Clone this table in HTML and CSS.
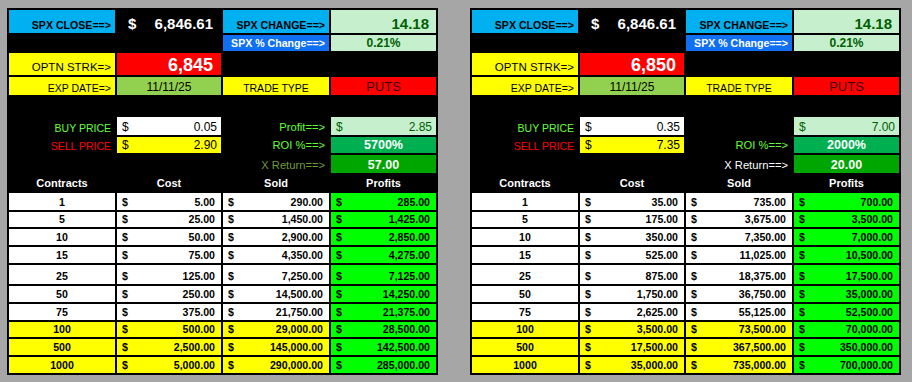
FILE: index.html
```html
<!DOCTYPE html>
<html>
<head>
<meta charset="utf-8">
<link rel="stylesheet" href="styles.css">
</head>
<body>
<div class="wrap">
  <div class="sheet">
    <div class="c r cy lbl b">SPX CLOSE==&gt;</div>
    <div class="c m big w"><span>$</span><span>6,846.61</span></div>
    <div class="c r cy lbl b">SPX CHANGE==&gt;</div>
    <div class="c r lg chg b">14.18</div>

    <div class="c"></div>
    <div class="c"></div>
    <div class="c r bl lbl b w">SPX % Change==&gt;</div>
    <div class="c ctr lg pct b">0.21%</div>

    <div class="c r ye strk">OPTN STRK=&gt;</div>
    <div class="c r rd bigr b w">6,845</div>
    <div class="c"></div>
    <div class="c"></div>

    <div class="c r ye lbl2">EXP DATE=&gt;</div>
    <div class="c ctr eg date">11/11/25</div>
    <div class="c ctr ye lbl2">TRADE TYPE</div>
    <div class="c ctr rd puts">PUTS</div>

    <div class="c"></div><div class="c"></div><div class="c"></div><div class="c"></div>

    <div class="c r lbl2 tg">BUY PRICE</div>
    <div class="c m wh price"><span>$</span><span>0.05</span></div>
    <div class="c r glbl tg">Profit==&gt;</div>
    <div class="c m lg price dg"><span>$</span><span>2.85</span></div>

    <div class="c r lbl2 tr">SELL PRICE</div>
    <div class="c m ye price"><span>$</span><span>2.90</span></div>
    <div class="c r glbl tg">ROI %==&gt;</div>
    <div class="c ctr roi val b w">5700%</div>

    <div class="c"></div>
    <div class="c"></div>
    <div class="c r glbl to">X Return==&gt;</div>
    <div class="c ctr xr val b w">57.00</div>

    <div class="c ctr hd">Contracts</div>
    <div class="c ctr hd">Cost</div>
    <div class="c ctr hd">Sold</div>
    <div class="c ctr hd">Profits</div>

    <div class="c ctr wh d">1</div><div class="c m wh d"><span>$</span><span>5.00</span></div><div class="c m wh d"><span>$</span><span>290.00</span></div><div class="c m gr d"><span>$</span><span>285.00</span></div>
    <div class="c ctr wh d">5</div><div class="c m wh d"><span>$</span><span>25.00</span></div><div class="c m wh d"><span>$</span><span>1,450.00</span></div><div class="c m gr d"><span>$</span><span>1,425.00</span></div>
    <div class="c ctr wh d">10</div><div class="c m wh d"><span>$</span><span>50.00</span></div><div class="c m wh d"><span>$</span><span>2,900.00</span></div><div class="c m gr d"><span>$</span><span>2,850.00</span></div>
    <div class="c ctr wh d">15</div><div class="c m wh d"><span>$</span><span>75.00</span></div><div class="c m wh d"><span>$</span><span>4,350.00</span></div><div class="c m gr d"><span>$</span><span>4,275.00</span></div>
    <div class="c ctr wh d">25</div><div class="c m wh d"><span>$</span><span>125.00</span></div><div class="c m wh d"><span>$</span><span>7,250.00</span></div><div class="c m gr d"><span>$</span><span>7,125.00</span></div>
    <div class="c ctr wh d">50</div><div class="c m wh d"><span>$</span><span>250.00</span></div><div class="c m wh d"><span>$</span><span>14,500.00</span></div><div class="c m gr d"><span>$</span><span>14,250.00</span></div>
    <div class="c ctr wh d">75</div><div class="c m wh d"><span>$</span><span>375.00</span></div><div class="c m wh d"><span>$</span><span>21,750.00</span></div><div class="c m gr d"><span>$</span><span>21,375.00</span></div>
    <div class="c ctr ye d">100</div><div class="c m ye d"><span>$</span><span>500.00</span></div><div class="c m ye d"><span>$</span><span>29,000.00</span></div><div class="c m gr d"><span>$</span><span>28,500.00</span></div>
    <div class="c ctr ye d">500</div><div class="c m ye d"><span>$</span><span>2,500.00</span></div><div class="c m ye d"><span>$</span><span>145,000.00</span></div><div class="c m gr d"><span>$</span><span>142,500.00</span></div>
    <div class="c ctr ye d">1000</div><div class="c m ye d"><span>$</span><span>5,000.00</span></div><div class="c m ye d"><span>$</span><span>290,000.00</span></div><div class="c m gr d"><span>$</span><span>285,000.00</span></div>
  </div>

  <div class="sheet">
    <div class="c r cy lbl b">SPX CLOSE==&gt;</div>
    <div class="c m big w"><span>$</span><span>6,846.61</span></div>
    <div class="c r cy lbl b">SPX CHANGE==&gt;</div>
    <div class="c r lg chg b">14.18</div>

    <div class="c"></div>
    <div class="c"></div>
    <div class="c r bl lbl b w">SPX % Change==&gt;</div>
    <div class="c ctr lg pct b">0.21%</div>

    <div class="c r ye strk">OPTN STRK=&gt;</div>
    <div class="c r rd bigr b w">6,850</div>
    <div class="c"></div>
    <div class="c"></div>

    <div class="c r ye lbl2">EXP DATE=&gt;</div>
    <div class="c ctr eg date">11/11/25</div>
    <div class="c ctr ye lbl2">TRADE TYPE</div>
    <div class="c ctr rd puts">PUTS</div>

    <div class="c"></div><div class="c"></div><div class="c"></div><div class="c"></div>

    <div class="c r lbl2 tg">BUY PRICE</div>
    <div class="c m wh price"><span>$</span><span>0.35</span></div>
    <div class="c"></div>
    <div class="c m lg price dg"><span>$</span><span>7.00</span></div>

    <div class="c r lbl2 tr">SELL PRICE</div>
    <div class="c m ye price"><span>$</span><span>7.35</span></div>
    <div class="c r glbl tg">ROI %==&gt;</div>
    <div class="c ctr roi val b w">2000%</div>

    <div class="c"></div>
    <div class="c"></div>
    <div class="c r glbl w">X Return==&gt;</div>
    <div class="c ctr xr val b w">20.00</div>

    <div class="c ctr hd">Contracts</div>
    <div class="c ctr hd">Cost</div>
    <div class="c ctr hd">Sold</div>
    <div class="c ctr hd">Profits</div>

    <div class="c ctr wh d">1</div><div class="c m wh d"><span>$</span><span>35.00</span></div><div class="c m wh d"><span>$</span><span>735.00</span></div><div class="c m gr d"><span>$</span><span>700.00</span></div>
    <div class="c ctr wh d">5</div><div class="c m wh d"><span>$</span><span>175.00</span></div><div class="c m wh d"><span>$</span><span>3,675.00</span></div><div class="c m gr d"><span>$</span><span>3,500.00</span></div>
    <div class="c ctr wh d">10</div><div class="c m wh d"><span>$</span><span>350.00</span></div><div class="c m wh d"><span>$</span><span>7,350.00</span></div><div class="c m gr d"><span>$</span><span>7,000.00</span></div>
    <div class="c ctr wh d">15</div><div class="c m wh d"><span>$</span><span>525.00</span></div><div class="c m wh d"><span>$</span><span>11,025.00</span></div><div class="c m gr d"><span>$</span><span>10,500.00</span></div>
    <div class="c ctr wh d">25</div><div class="c m wh d"><span>$</span><span>875.00</span></div><div class="c m wh d"><span>$</span><span>18,375.00</span></div><div class="c m gr d"><span>$</span><span>17,500.00</span></div>
    <div class="c ctr wh d">50</div><div class="c m wh d"><span>$</span><span>1,750.00</span></div><div class="c m wh d"><span>$</span><span>36,750.00</span></div><div class="c m gr d"><span>$</span><span>35,000.00</span></div>
    <div class="c ctr wh d">75</div><div class="c m wh d"><span>$</span><span>2,625.00</span></div><div class="c m wh d"><span>$</span><span>55,125.00</span></div><div class="c m gr d"><span>$</span><span>52,500.00</span></div>
    <div class="c ctr ye d">100</div><div class="c m ye d"><span>$</span><span>3,500.00</span></div><div class="c m ye d"><span>$</span><span>73,500.00</span></div><div class="c m gr d"><span>$</span><span>70,000.00</span></div>
    <div class="c ctr ye d">500</div><div class="c m ye d"><span>$</span><span>17,500.00</span></div><div class="c m ye d"><span>$</span><span>367,500.00</span></div><div class="c m gr d"><span>$</span><span>350,000.00</span></div>
    <div class="c ctr ye d">1000</div><div class="c m ye d"><span>$</span><span>35,000.00</span></div><div class="c m ye d"><span>$</span><span>735,000.00</span></div><div class="c m gr d"><span>$</span><span>700,000.00</span></div>
  </div>
</div>
</body>
</html>
```

FILE: styles.css
```css
html, body {
  margin: 0;
  padding: 0;
  background: #a6a6a6;
}
.wrap {
  display: flex;
  gap: 32px;
  padding: 8px 0 0 7px;
  align-items: flex-start;
}
.sheet {
  display: grid;
  grid-template-columns: 106px 104px 106px 105px;
  grid-template-rows: 23px 16px 22px 18px 18px 18px 16px 18px 16px 17px 15px 16px 16px 19px 16px 16px 15px 16px 16px;
  gap: 2px;
  padding: 2px;
  background: #000;
  font-family: "Liberation Sans", Arial, sans-serif;
}
.c {
  display: flex;
  align-items: flex-end;
  line-height: 1;
  padding: 0 4px 2px 4px;
  white-space: nowrap;
  overflow: hidden;
  color: #000;
  font-size: 11px;
}
.r { justify-content: flex-end; }
.ctr { justify-content: center; }
.m { justify-content: space-between; padding-left: 5px; padding-right: 6px; }
.b { font-weight: bold; }
.w { color: #fff; }

.cy { background: #00b0f0; }
.bl { background: #1170f2; }
.lg { background: #c6efce; }
.ye { background: #ffff00; }
.rd { background: #ff0000; }
.eg { background: #92d050; }
.wh { background: #fff; }
.roi { background: #00b050; }
.xr { background: #00a600; }
.gr { background: #00ff00; }

.lbl { font-size: 10.6px; }
.lbl2 { font-size: 10.5px; }
.strk { font-size: 11.5px; }
.big { font-size: 15px; font-weight: bold; padding-left: 11px; padding-right: 8px; }
.bigr { font-size: 18px; padding-right: 8px; padding-bottom: 1px; }
.chg { font-size: 15px; color: #006100; padding-right: 7px; }
.pct { font-size: 12px; color: #006100; }
.date { font-size: 12px; }
.puts { font-size: 13px; color: #3a0000; }
.tg { color: #66ff33; }
.tr { color: #ff0000; }
.to { color: #6f9a3a; }
.glbl { font-size: 11.2px; }
.price { font-size: 12px; padding-right: 4px; }
.dg { color: #006100; }
.val { font-size: 12.5px; }
.hd { font-size: 11px; font-weight: bold; color: #fff; }
.d { font-size: 10.6px; font-weight: bold; }
```
